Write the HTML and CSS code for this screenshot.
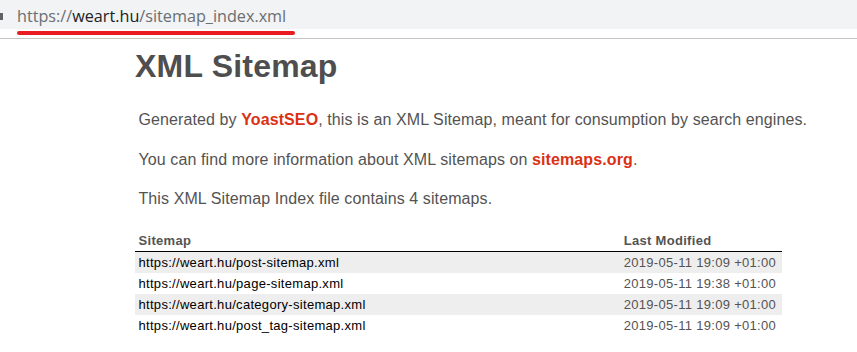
FILE: index.html
```html
<!DOCTYPE html>
<html lang="en">
<head>
    <meta charset="UTF-8">
    <meta name="viewport" content="width=device-width, initial-scale=1.0">
    <title>XML Sitemap</title>
    <link rel="stylesheet" href="styles.css">
</head>
<body>
    <div class="addressbar">
        <span class="lock"></span>
        <div class="url">
            <span class="dim">https://</span><span class="host">weart.hu</span><span class="dim">/sitemap_index.xml</span>
        </div>
        <span class="mark"></span>
    </div>

    <div id="content">
        <h1>XML Sitemap</h1>
        <p class="expl">
            Generated by <a href="#">YoastSEO</a>, this is an XML Sitemap, meant for consumption by search engines.
        </p>
        <p class="expl">
            You can find more information about XML sitemaps on <a href="#">sitemaps.org</a>.
        </p>
        <p class="expl">
            This XML Sitemap Index file contains 4 sitemaps.
        </p>
        <table id="sitemap">
            <thead>
                <tr>
                    <th class="col-loc">Sitemap</th>
                    <th class="col-mod">Last Modified</th>
                </tr>
            </thead>
            <tbody>
                <tr>
                    <td><a href="#">https://weart.hu/post-sitemap.xml</a></td>
                    <td>2019-05-11 19:09 +01:00</td>
                </tr>
                <tr>
                    <td><a href="#">https://weart.hu/page-sitemap.xml</a></td>
                    <td>2019-05-11 19:38 +01:00</td>
                </tr>
                <tr>
                    <td><a href="#">https://weart.hu/category-sitemap.xml</a></td>
                    <td>2019-05-11 19:09 +01:00</td>
                </tr>
                <tr>
                    <td><a href="#">https://weart.hu/post_tag-sitemap.xml</a></td>
                    <td>2019-05-11 19:09 +01:00</td>
                </tr>
            </tbody>
        </table>
    </div>
</body>
</html>
```

FILE: styles.css
```css
/* browser address bar on top of the page */
body {
    margin: 0;
    font-family: "Liberation Sans", Helvetica, Arial, sans-serif;
    font-size: 16px;
    color: #545353;
    background: #fff;
}
.addressbar {
    position: relative;
    height: 38px;
    border-bottom: 1px solid #c4c4c4;
    background: linear-gradient(#f1f3f4 0, #f1f3f4 29px, #fff 29px);
}
.lock {
    position: absolute;
    left: 0;
    top: 13px;
    width: 3px;
    height: 7px;
    background: #5f6368;
}
.url {
    padding: 5px 0 0 17px;
    font-family: "Open Sans", "Noto Sans", sans-serif;
    font-size: 16.2px;
    line-height: 22px;
}
.url .dim {
    color: #6b6e72;
}
.url .host {
    color: #202124;
}
.mark {
    position: absolute;
    left: 17px;
    top: 31px;
    width: 278px;
    height: 4px;
    border-radius: 2px;
    background: #e81c22;
}

/* sitemap content */
#content {
    padding-left: 135px;
}
h1 {
    margin: 9px 0 26px;
    font-size: 32px;
    letter-spacing: 0.2px;
    color: #4f4e4e;
}
.expl {
    margin: 21px 3.5px;
    line-height: 18.7px;
    letter-spacing: 0.1px;
}
.expl a {
    color: #da3114;
    font-weight: bold;
    text-decoration: none;
}
#sitemap {
    width: 647px;
    border: none;
    border-collapse: collapse;
    margin-top: 21px;
}
#sitemap th,
#sitemap td {
    padding: 3px 3.5px;
    font-size: 13px;
    line-height: 15px;
    letter-spacing: 0.3px;
    text-align: left;
}
#sitemap th {
    border-bottom: 1px solid #000;
}
.col-loc {
    width: 75%;
}
#sitemap tbody tr:nth-child(odd) td {
    background-color: #eee;
}
#sitemap a {
    color: #000;
    text-decoration: none;
}
```
